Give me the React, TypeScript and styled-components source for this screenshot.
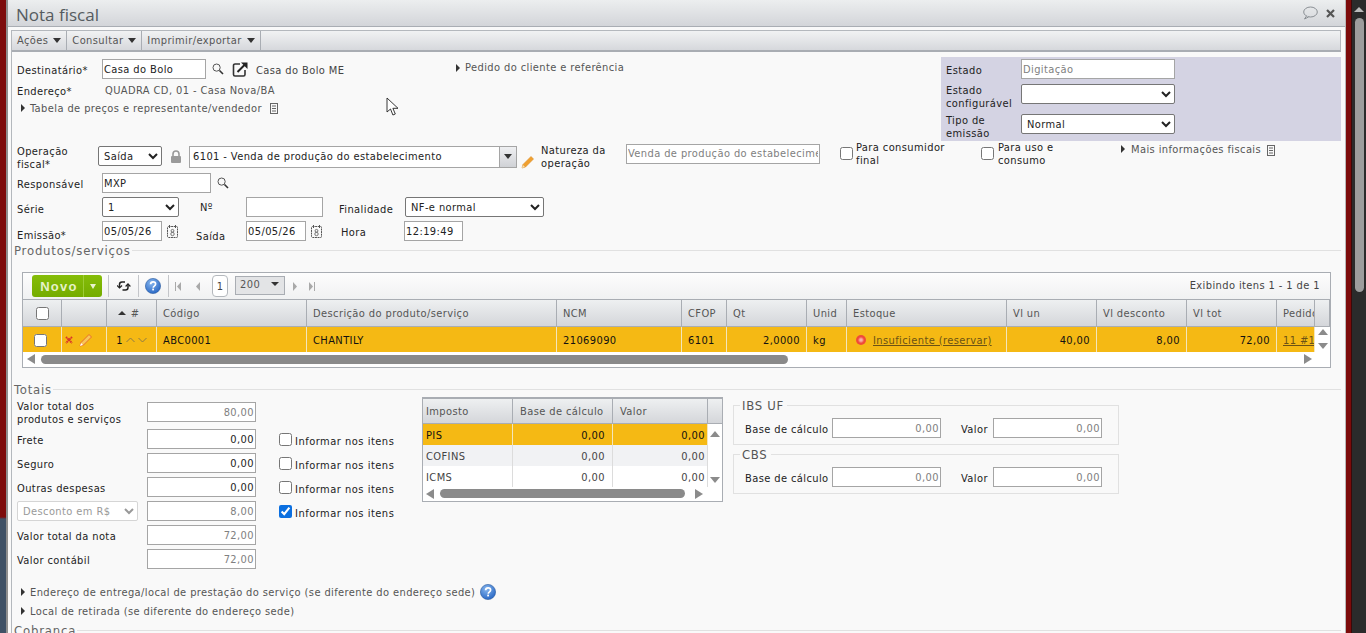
import React from "react";
import styled, { createGlobalStyle } from "styled-components";

const Global = createGlobalStyle`
  html, body { margin: 0; padding: 0; overflow: hidden; background: #2a2a2a; }
  * { box-sizing: border-box; }
  body { font-family: "DejaVu Sans", "Liberation Sans", sans-serif; font-stretch: condensed; font-size: 11px; letter-spacing: .4px; color: #333; }
`;

const Shell = styled.div`display: flex; width: 1366px; height: 633px; overflow: hidden;`;
const LeftEdge = styled.div`
  width: 8px; flex: none;
  background: linear-gradient(#7d0b0b 0, #7d0b0b 517px, #3f5166 519px, #3f5166 100%);
  border-right: 2px solid #8f8f8f;
`;
const Dialog = styled.div`width: 1337px; flex: none; background: #f9f9f9; display: flex; flex-direction: column; overflow: hidden;`;
const RightEdge = styled.div`width: 7px; flex: none; background: #7d0b0b; border-left: 1px solid #b8b8b8; border-right: 1px solid #3a0a0a;`;
const PageScroll = styled.div`width: 14px; flex: none; background: #2b2b2b; display: flex; flex-direction: column; align-items: center; padding-top: 7px;`;
const ScrollThumb = styled.div`width: 9px; height: 274px; margin-top: 6px; background: #9d9d9d; border-radius: 5px;`;

const TitleBar = styled.div`
  height: 27px; flex: none; display: flex; align-items: center; justify-content: space-between;
  padding: 2px 10px 0 8px; background: linear-gradient(#eceeef, #d3d5d9); border-bottom: 1px solid #a9adb3;
`;
const Title = styled.div`font-size: 17px; letter-spacing: 0; color: #555b60; font-stretch: normal; font-family: "Open Sans", sans-serif;`;
const TitleIcons = styled.div`display: flex; align-items: center; gap: 8px; margin-top: -2px;`;

const Body = styled.div`flex: 1; margin: 3px 0 0 3px; width: 1330px; display: flex; flex-direction: column; border-left: 1px solid #b4b8bd;`;
const MenuBar = styled.div`
  height: 22px; flex: none; display: flex; background: linear-gradient(#f1f2f3, #d6d8dc);
  border: 1px solid #b4b8bd; border-left: 0; border-bottom: 2px solid #a9adb3;
`;
const MenuItem = styled.div`
  display: flex; align-items: center; gap: 5px; padding: 0 5px; color: #555; border-right: 1px solid #a9adb3; font-size: 11px;
`;
const Caret = styled.span`width: 0; height: 0; border: 4.5px solid transparent; border-top: 5px solid #333; border-bottom: 0; margin-top: -1px;`;

const Form = styled.div`flex: 1; padding: 5px 0 0 5px; display: flex; flex-direction: column;`;

const TopSection = styled.div`display: flex; height: 84px; flex: none;`;
const TopLeft = styled.div`width: 436px; flex: none; display: flex; flex-direction: column; padding-top: 2px;`;
const TopMiddle = styled.div`flex: 1; padding: 3px 0 0 3px; line-height: 14px;`;
const StatePanel = styled.div`width: 400px; flex: none; background: #d4d3e3; display: grid; grid-template-columns: 75px 154px; grid-auto-rows: min-content; padding: 2px 0 0 5px; align-content: start;`;
const PanelLabel = styled.div<{ $h: number; $pt: number }>`color: #222; line-height: 13px; height: ${(p) => p.$h}px; display: flex; align-items: center; padding-top: ${(p) => p.$pt}px;`;
const PanelControl = styled.div`display: flex; align-items: center;`;

const Row = styled.div<{ $h: number; $gap?: number; $ml?: number; $mt?: number }>`
  display: flex; align-items: center; height: ${(p) => p.$h}px; flex: none; gap: ${(p) => p.$gap ?? 0}px;
  margin-left: ${(p) => p.$ml ?? 0}px; margin-top: ${(p) => p.$mt ?? 0}px;
`;
const Label = styled.div<{ $w?: number; $ml?: number; $c?: string; $dy?: number }>`
  width: ${(p) => (p.$w ? `${p.$w}px` : "auto")}; flex: none; margin-left: ${(p) => p.$ml ?? 0}px; color: ${(p) => p.$c ?? "#222"};
  line-height: 13px; position: relative; top: ${(p) => p.$dy ?? 0}px; white-space: nowrap;
`;
const GrayText = styled.span`color: #555; white-space: nowrap;`;

const Input = styled.input<{ $w: number; $ml?: number; $right?: boolean; $muted?: boolean; $mt?: number }>`
  width: ${(p) => p.$w}px; height: 20px; flex: none; margin: ${(p) => p.$mt ?? 0}px 0 0 ${(p) => p.$ml ?? 0}px; padding: 0 1px;
  border: 1px solid #a5a5a5; background: #fff; border-radius: 0; outline: none;
  font: inherit; font-stretch: condensed; font-family: inherit; letter-spacing: .4px;
  color: ${(p) => (p.$muted ? "#808080" : "#222")}; text-align: ${(p) => (p.$right ? "right" : "left")};
`;
const Select = styled.select<{ $w: number; $ml?: number; $h?: number; $muted?: boolean; $mt?: number }>`
  width: ${(p) => p.$w}px; height: ${(p) => p.$h ?? 20}px; flex: none; margin: ${(p) => p.$mt ?? 0}px 0 0 ${(p) => p.$ml ?? 0}px;
  font: inherit; font-family: inherit; font-stretch: condensed; letter-spacing: .4px; background: #fff; color: ${(p) => (p.$muted ? "#999" : "#222")};
  border: 1px solid ${(p) => (p.$muted ? "#d5d5d5" : "#767676")}; border-radius: 2px; padding: 0 0 0 1px; outline: none;
`;
const Check = styled.input.attrs({ type: "checkbox", readOnly: true })<{ $ml?: number; $mt?: number }>`
  width: 13px; height: 13px; margin: ${(p) => p.$mt ?? 0}px 0 0 ${(p) => p.$ml ?? 0}px; flex: none; accent-color: #0b6fe0;
`;
const Arrow = styled.span<{ $mt?: number }>`width: 0; height: 0; flex: none; margin-top: ${(p) => p.$mt ?? 0}px; border: 4px solid transparent; border-left: 4px solid #333; border-right: 0;`;

const Combo = styled.div`
  width: 328px; height: 22px; flex: none; margin: 2px 0 0 7px; display: flex; border: 1px solid #a5a5a5; background: #fff;
`;
const ComboText = styled.div`flex: 1; display: flex; align-items: center; padding: 0 0 1px 3px; color: #222;`;
const ComboBtn = styled.div`width: 17px; display: flex; align-items: center; justify-content: center; background: linear-gradient(#eff0f2, #d0d2d6); border-left: 1px solid #a5a5a5;`;

const SectionTitle = styled.div<{ $mt?: number }>`
  display: flex; align-items: center; margin: ${(p) => p.$mt ?? 0}px 0 0 -3px; height: 15px; flex: none;
  font-size: 13px; letter-spacing: .8px; color: #666; line-height: 15px;
  &::after { content: ""; flex: 1; height: 1px; background: #e1e1e1; margin-left: 1px; }
`;

const Grid = styled.div`width: 1309px; height: 96px; flex: none; margin: 14px 0 0 5px; border: 1px solid #a9adb3; background: #fff; display: flex; flex-direction: column;`;
const GridToolbar = styled.div`
  height: 26px; flex: none; display: flex; align-items: center; background: linear-gradient(#fdfdfd, #f0f1f2);
`;
const NewButton = styled.div`
  margin-left: 9px; width: 70px; height: 22px; display: flex; align-items: stretch; background: linear-gradient(#85bd08, #74ac00);
  border-radius: 3px; color: #e6f2c8; font-weight: bold; font-size: 13px; font-stretch: normal; font-family: "Liberation Sans", sans-serif;
`;
const NewLabel = styled.div`flex: 1; display: flex; align-items: center; justify-content: center; border-right: 1px solid #9ccc35; letter-spacing: 1.3px; padding-left: 3px;`;
const NewCaret = styled.div`width: 18px; display: flex; align-items: center; justify-content: center;`;
const WhiteCaret = styled.span`width: 0; height: 0; border: 3px solid transparent; border-top: 5px solid #e9f3cf; border-bottom: 0;`;
const ToolSep = styled.div<{ $ml: number }>`width: 1px; height: 22px; background: #c4c6ca; margin-left: ${(p) => p.$ml}px;`;
const ToolIcon = styled.div<{ $ml: number; $w: number }>`width: ${(p) => p.$w}px; margin-left: ${(p) => p.$ml}px; display: flex; align-items: center; justify-content: center; flex: none;`;
const PageBox = styled.div`width: 16px; height: 22px; margin-left: 11px; background: #fff; border: 1px solid #b4b8bd; border-radius: 4px; display: flex; align-items: center; justify-content: center; color: #444;`;
const PageSize = styled.div`width: 50px; height: 19px; margin: -2px 0 0 7px; border: 1px solid #a9adb3; background: #e3e4e6; display: flex; align-items: center; justify-content: space-between; padding: 0 5px 2px 4px; color: #555;`;
const Showing = styled.div`margin-left: auto; padding-right: 10px; color: #444; padding-bottom: 1px;`;

const HeadRow = styled.div<{ $h: number }>`display: flex; height: ${(p) => p.$h}px; flex: none; background: linear-gradient(#eef0f1, #d4d6da); border-top: 1px solid #a9adb3; border-bottom: 1px solid #a9adb3;`;
const HeadCell = styled.div<{ $w: number; $center?: boolean; $pl?: number; $noBorder?: boolean }>`
  width: ${(p) => p.$w}px; flex: none; display: flex; align-items: center; justify-content: ${(p) => (p.$center ? "center" : "flex-start")}; gap: 5px; padding-left: ${(p) => (p.$center ? 0 : p.$pl ?? 6)}px;
  border-right: ${(p) => (p.$noBorder ? "0" : "1px solid #a9adb3")}; color: #555; overflow: hidden; white-space: nowrap;
`;
const SortHead = styled(HeadCell)`padding-right: 6px;`;
const DataRow = styled.div<{ $h: number; $tone?: "sel" | "alt" | "plain" }>`
  display: flex; height: ${(p) => p.$h}px; flex: none;
  background: ${(p) => (p.$tone === "alt" ? "#f1f2f4" : p.$tone === "plain" ? "#fff" : "#f5b914")};
  color: ${(p) => (p.$tone === "sel" || !p.$tone ? "#111" : "#444")};
  & > div { border-right-color: ${(p) => (p.$tone === "sel" || !p.$tone ? "#f3e6bd" : "#dcdcdc")}; }
`;
const DataCell = styled.div<{ $w: number; $right?: boolean; $center?: boolean; $pl?: number; $pr?: number }>`
  width: ${(p) => p.$w}px; flex: none; display: flex; align-items: center; overflow: hidden; white-space: nowrap; gap: 3px;
  justify-content: ${(p) => (p.$right ? "flex-end" : p.$center ? "center" : "flex-start")};
  padding: 1px ${(p) => (p.$right ? p.$pr ?? 6 : 0)}px 0 ${(p) => (p.$right || p.$center ? 0 : p.$pl ?? 6)}px;
  border-right: 1px solid #e9e4d2;
`;
const ActionCell = styled(DataCell)`gap: 6px; padding-left: 3px;`;
const RowWrap = styled.div`display: flex;`;
const VScroll = styled.div<{ $w: number; $pt: number; $pb: number }>`
  width: ${(p) => p.$w}px; flex: none; display: flex; flex-direction: column; align-items: center; justify-content: space-between;
  padding: ${(p) => p.$pt}px 0 ${(p) => p.$pb}px; background: #fff;
`;
const Tri = styled.span<{ $dir: "up" | "down" | "left" | "right"; $s?: number; $len?: number; $c?: string; $ml?: number }>`
  width: 0; height: 0; flex: none; margin-left: ${(p) => p.$ml ?? 0}px;
  ${(p) => {
    const s = p.$s ?? 5; const l = p.$len ?? s; const c = p.$c ?? "#8b8b8b";
    if (p.$dir === "up") return `border-left:${s}px solid transparent;border-right:${s}px solid transparent;border-bottom:${l}px solid ${c};`;
    if (p.$dir === "down") return `border-left:${s}px solid transparent;border-right:${s}px solid transparent;border-top:${l}px solid ${c};`;
    if (p.$dir === "left") return `border-top:${s}px solid transparent;border-bottom:${s}px solid transparent;border-right:${l}px solid ${c};`;
    return `border-top:${s}px solid transparent;border-bottom:${s}px solid transparent;border-left:${l}px solid ${c};`;
  }}
`;
const HScroll = styled.div<{ $pl: number }>`flex: 1; display: flex; align-items: center; background: #fff; padding: 0 0 1px ${(p) => p.$pl}px;`;
const HThumb = styled.div<{ $w: number; $ml: number }>`width: ${(p) => p.$w}px; height: 9px; background: #8a8a8a; border-radius: 5px; margin-left: ${(p) => p.$ml}px;`;
const LinkText = styled.span`color: #6b5215; text-decoration: underline;`;
const StatusDot = styled.span`width: 10px; height: 10px; border-radius: 50%; background: radial-gradient(#f7b0a8 15%, #f04a3a 45%); margin: 0 4px 0 3px;flex:none;`;

const TotalsArea = styled.div`display: flex; height: 178px; flex: none;`;
const TotalsCol = styled.div`width: 247px; flex: none;`;
const TotalRow = styled.div<{ $h: number }>`display: flex; height: ${(p) => p.$h}px; align-items: center; justify-content: space-between; padding-right: 8px;`;
const ChecksCol = styled.div`width: 158px; flex: none; padding-top: 30px; display: flex; flex-direction: column;`;
const CheckRow = styled.div`height: 24px; display: flex; align-items: center; gap: 3px; margin-left: 15px; color: #222;`;
const CheckText = styled.span`position: relative; top: 2px; letter-spacing: .5px;`;
const TaxGrid = styled.div`width: 301px; height: 105px; flex: none; border: 1px solid #a9adb3; background: #fff; display: flex; flex-direction: column;`;
const TaxBoxes = styled.div`flex: none; margin: 1px 0 0 10px; display: flex; flex-direction: column; gap: 2px;`;
const TaxBox = styled.fieldset`
  width: 386px; height: 47px; margin: 0; padding: 6px 0 0 11px; border: 1px solid #e1e1e1; display: flex; align-items: center;
`;
const TaxLegend = styled.legend`font-size: 13px; letter-spacing: .7px; color: #555; padding: 0 3px 0 2px; margin-left: -5px; line-height: 14px; position: relative; top: 1px;`;
const Collapsible = styled.div<{ $mt: number }>`display: flex; align-items: center; gap: 5px; margin: ${(p) => p.$mt}px 0 0 4px; color: #555; height: 14px; flex: none;`;

const DocIcon = () => (
  <svg width="10" height="11" viewBox="0 0 10 11" fill="none" stroke="#666" style={{ flex: "none" }}><rect x="1.5" y="0.5" width="7" height="10" /><path d="M3 3h4M3 5.5h4M3 8h4" /></svg>
);
const Search = () => (
  <svg width="12" height="12" viewBox="0 0 12 12" fill="none" style={{ flex: "none" }}><circle cx="4.6" cy="4.6" r="3.6" stroke="#555" /><path d="M7.5 7.5l3.5 3.5" stroke="#333" strokeWidth="1.6" /></svg>
);
const Pencil = ({ faded }: { faded?: boolean }) => (
  <svg width="14" height="14" viewBox="0 0 14 14" style={{ flex: "none" }}>
    <path d="M1 13l1-3.500L10 1.500 12.500 4 4.500 12z" fill={faded ? "#f8c65a" : "#f0a030"} stroke={faded ? "#e8702a" : "#d98a20"} strokeWidth={faded ? 1 : 0.6} />
    <path d="M1 13l1-3 2 2z" fill={faded ? "#fff" : "#f5e0b8"} />
  </svg>
);
const Calendar = () => (
  <svg width="11" height="13" viewBox="0 0 11 13" fill="none" stroke="#555" style={{ flex: "none" }}><rect x=".5" y="1.5" width="10" height="11" rx="1" strokeDasharray="2 .6" /><path d="M2.500 0v3M8.500 0v3" /><circle cx="5.500" cy="5.800" r="1.400" strokeWidth=".8" /><circle cx="5.500" cy="9" r="1.700" strokeWidth=".8" /></svg>
);
const Lock = () => (
  <svg width="12" height="13" viewBox="0 0 12 13" style={{ flex: "none", marginLeft: 8 }}><path d="M3 6V4a3 3 0 016 0v2" fill="none" stroke="#999" strokeWidth="1.6" /><rect x="1" y="6" width="10" height="7" rx="1" fill="#9a9a9a" /></svg>
);
const External = () => (
  <svg width="17" height="16" viewBox="0 0 17 16" fill="none" style={{ flex: "none" }}><path d="M8 3H3a1.500 1.500 0 00-1.500 1.500v9A1.500 1.500 0 003 15h8.500a1.500 1.500 0 001.500-1.500V9" stroke="#333" strokeWidth="1.6" /><path d="M5.500 11l8-8" stroke="#222" strokeWidth="2" /><path d="M9 1.500h6.500V8z" fill="#222" /></svg>
);
const HelpBadge = ({ size = 16 }: { size?: number }) => (
  <svg width={size} height={size} viewBox="0 0 16 16" style={{ flex: "none" }}>
    <defs><radialGradient id="hb" cx=".4" cy=".3" r=".8"><stop offset="0" stopColor="#86b6ee" /><stop offset="1" stopColor="#1f5fc0" /></radialGradient></defs>
    <circle cx="8" cy="8" r="7.600" fill="url(#hb)" stroke="#2a5a9e" strokeWidth=".6" />
    <path d="M5.600 6.200C5.700 4.600 6.700 3.800 8.100 3.800c1.500 0 2.500.9 2.500 2.200 0 1.100-.7 1.600-1.400 2.100-.6.4-.9.8-.9 1.600" fill="none" stroke="#fff" strokeWidth="1.700" />
    <rect x="7.200" y="10.600" width="1.800" height="1.800" fill="#fff" />
  </svg>
);
const Refresh = () => (
  <svg width="14" height="12" viewBox="0 0 14 12" fill="none" stroke="#222" strokeWidth="1.5"><path d="M2.500 7V4.500C2.500 3 3.500 2 5 2h3" /><path d="M0 5.500l2.500 2.500L5 5.500" strokeWidth="1.2" /><path d="M11 5v2.500c0 1.500-1 2.500-2.500 2.500h-3" /><path d="M8.600 6.500L11 3.800l2.400 2.700" strokeWidth="1.2" /></svg>
);
const Comment = () => (
  <svg width="16" height="14" viewBox="0 0 16 14" fill="none" stroke="#8a8f94"><ellipse cx="8.500" cy="6" rx="6.800" ry="5" /><path d="M4.500 10L2.500 13l4-2" fill="#e0e2e4" /></svg>
);
const Close = () => (
  <svg width="9" height="9" viewBox="0 0 9 9" stroke="#555" strokeWidth="2.2"><path d="M1 1l7 7M8 1L1 8" /></svg>
);
const Cursor = () => (
  <svg width="14" height="20" viewBox="0 0 14 20" style={{ position: "absolute", left: 386, top: 97 }}><path d="M1 1v14l3.500-3 2.400 6 2.400-1-2.400-5.700H12z" fill="#fff" stroke="#222" strokeWidth=".9" /></svg>
);
const RedX = () => (
  <svg width="8" height="8" viewBox="0 0 8 8" stroke="#d8322a" strokeWidth="2" strokeDasharray="1.500 .5" style={{ flex: "none" }}><path d="M1 1l6 6M7 1L1 7" /></svg>
);
const Chevron = ({ up }: { up?: boolean }) => (
  <svg width="9" height="6" viewBox="0 0 9 6" fill="none" stroke="#8c7a44" style={{ flex: "none" }}><path d={up ? "M.5 5L4.500 1l4 4" : "M.5 1l4 4 4-4"} /></svg>
);
const Pager = ({ kind }: { kind: "first" | "prev" | "next" | "last" }) => (
  <svg width="7" height="9" viewBox="0 0 7 9" fill="#a9a9a9" style={{ flex: "none" }}>
    {kind === "first" && <><rect width="1" height="9" /><path d="M6 0v9L2 4.500z" /></>}
    {kind === "prev" && <path d="M6 0v9L2 4.500z" />}
    {kind === "next" && <path d="M1 0v9l4-4.500z" />}
    {kind === "last" && <><path d="M0 0v9l4-4.500z" /><rect x="5" width="1" height="9" /></>}
  </svg>
);

const columns: { t: string; w: number; v: React.ReactNode; right?: boolean }[] = [
  { t: "Código", w: 150, v: "ABC0001" },
  { t: "Descrição do produto/serviço", w: 250, v: "CHANTILY" },
  { t: "NCM", w: 125, v: "21069090" },
  { t: "CFOP", w: 45, v: "6101" },
  { t: "Qt", w: 80, v: "2,0000", right: true },
  { t: "Unid", w: 40, v: "kg" },
  { t: "Estoque", w: 160, v: <><StatusDot /><LinkText>Insuficiente (reservar)</LinkText></> },
  { t: "Vl un", w: 90, v: "40,00", right: true },
  { t: "Vl desconto", w: 90, v: "8,00", right: true },
  { t: "Vl tot", w: 90, v: "72,00", right: true },
];

const totals = [
  { l: "Frete", v: "0,00" },
  { l: "Seguro", v: "0,00" },
  { l: "Outras despesas", v: "0,00" },
];
const taxes: { n: string; tone: "sel" | "alt" | "plain" }[] = [
  { n: "PIS", tone: "sel" },
  { n: "COFINS", tone: "alt" },
  { n: "ICMS", tone: "plain" },
];

const TaxPair = () => (
  <>
    <Label $w={87} $dy={1}>Base de cálculo</Label>
    <Input $w={109} $right $muted defaultValue="0,00" />
    <Label $w={32} $ml={20} $dy={1}>Valor</Label>
    <Input $w={109} $right $muted defaultValue="0,00" />
  </>
);

export default function App() {
  return (
    <Shell>
      <Global />
      <LeftEdge />
      <Dialog>
        <TitleBar>
          <Title>Nota fiscal</Title>
          <TitleIcons><Comment /><Close /></TitleIcons>
        </TitleBar>
        <Body>
          <MenuBar>
            <MenuItem>Ações <Caret /></MenuItem>
            <MenuItem>Consultar <Caret /></MenuItem>
            <MenuItem>Imprimir/exportar <Caret /></MenuItem>
          </MenuBar>
          <Form>
            <TopSection>
              <TopLeft>
                <Row $h={20}>
                  <Label $w={85} $dy={1}>Destinatário*</Label>
                  <Input $w={104} defaultValue="Casa do Bolo" />
                  <Row $h={20} $ml={6}><Search /></Row>
                  <Row $h={20} $ml={8}><External /></Row>
                  <Label $ml={7} $c="#444" $dy={1}>Casa do Bolo ME</Label>
                </Row>
                <Row $h={20} $mt={1}>
                  <Label $w={88} $dy={1}>Endereço*</Label>
                  <GrayText>QUADRA CD, 01 - Casa Nova/BA</GrayText>
                </Row>
                <Row $h={14} $gap={5} $ml={4} $mt={1}>
                  <Arrow /><GrayText>Tabela de preços e representante/vendedor</GrayText><Row $h={12} $ml={2}><DocIcon /></Row>
                </Row>
              </TopLeft>
              <TopMiddle>
                <Row $h={14} $gap={5} $mt={1}><Arrow /><GrayText>Pedido do cliente e referência</GrayText></Row>
              </TopMiddle>
              <StatePanel>
                <PanelLabel $h={20} $pt={2}>Estado</PanelLabel>
                <PanelControl><Input $w={154} $muted defaultValue="Digitação" /></PanelControl>
                <PanelLabel $h={30} $pt={6}>Estado<br />configurável</PanelLabel>
                <PanelControl><Select $w={154}><option></option></Select></PanelControl>
                <PanelLabel $h={30} $pt={6}>Tipo de<br />emissão</PanelLabel>
                <PanelControl><Select $w={154}><option>Normal</option></Select></PanelControl>
              </StatePanel>
            </TopSection>

            <Row $h={28} $mt={1}>
              <Label $w={81} $dy={2}>Operação<br />fiscal*</Label>
              <Select $w={64}><option>Saída</option></Select>
              <Lock />
              <Combo>
                <ComboText>6101 - Venda de produção do estabelecimento</ComboText>
                <ComboBtn><Caret /></ComboBtn>
              </Combo>
              <Row $h={14} $ml={4} $mt={11}><Pencil /></Row>
              <Label $w={85} $ml={6} $dy={1}>Natureza da<br />operação</Label>
              <Input $w={194} $muted $mt={-5} defaultValue="Venda de produção do estabelecimento" />
              <Check $ml={20} $mt={-6} />
              <Label $w={125} $ml={3} $dy={-2}>Para consumidor<br />final</Label>
              <Check $mt={-6} />
              <Label $w={123} $ml={4} $dy={-2}>Para uso e<br />consumo</Label>
              <Arrow $mt={-14} />
              <Label $ml={6} $c="#555" $dy={-7}>Mais informações fiscais</Label>
              <Row $h={12} $ml={5} $mt={-12}><DocIcon /></Row>
            </Row>

            <Row $h={20} $mt={3}>
              <Label $w={85} $dy={1}>Responsável</Label>
              <Input $w={109} defaultValue="MXP" />
              <Row $h={20} $ml={6}><Search /></Row>
            </Row>
            <Row $h={20} $mt={4}>
              <Label $w={85} $dy={2}>Série</Label>
              <Select $w={77}><option>1</option></Select>
              <Label $w={46} $ml={21}>Nº</Label>
              <Input $w={77} />
              <Label $w={66} $ml={16} $dy={2}>Finalidade</Label>
              <Select $w={139}><option>NF-e normal</option></Select>
            </Row>
            <Row $h={20} $mt={4}>
              <Label $w={85} $dy={4}>Emissão*</Label>
              <Input $w={60} defaultValue="05/05/26" />
              <Row $h={20} $ml={5}><Calendar /></Row>
              <Label $w={50} $ml={18} $dy={5}>Saída</Label>
              <Input $w={60} defaultValue="05/05/26" />
              <Row $h={20} $ml={5}><Calendar /></Row>
              <Label $w={63} $ml={19} $dy={1}>Hora</Label>
              <Input $w={59} defaultValue="12:19:49" />
            </Row>

            <SectionTitle $mt={2}>Produtos/serviços</SectionTitle>
            <Grid>
              <GridToolbar>
                <NewButton><NewLabel>Novo</NewLabel><NewCaret><WhiteCaret /></NewCaret></NewButton>
                <ToolSep $ml={6} />
                <ToolIcon $ml={7} $w={16}><Refresh /></ToolIcon>
                <ToolSep $ml={6} />
                <ToolIcon $ml={6} $w={16}><HelpBadge /></ToolIcon>
                <ToolSep $ml={7} />
                <ToolIcon $ml={6} $w={7}><Pager kind="first" /></ToolIcon>
                <ToolIcon $ml={12} $w={7}><Pager kind="prev" /></ToolIcon>
                <PageBox>1</PageBox>
                <PageSize>200 <Tri $dir="down" $c="#333" $s={4} /></PageSize>
                <ToolIcon $ml={7} $w={7}><Pager kind="next" /></ToolIcon>
                <ToolIcon $ml={10} $w={7}><Pager kind="last" /></ToolIcon>
                <Showing>Exibindo itens 1 - 1 de 1</Showing>
              </GridToolbar>
              <HeadRow $h={28}>
                <HeadCell $w={39} $center><Check /></HeadCell>
                <HeadCell $w={45} />
                <SortHead $w={50} $center><Tri $dir="up" $c="#333" $s={4} $len={4} /># </SortHead>
                {columns.map((c) => <HeadCell key={c.t} $w={c.w}>{c.t}</HeadCell>)}
                <HeadCell $w={38}>Pedido</HeadCell>
                <HeadCell $w={15} />
              </HeadRow>
              <RowWrap>
                <DataRow $h={25} $tone="sel">
                  <DataCell $w={39} $center><Check $ml={-4} /></DataCell>
                  <ActionCell $w={45}><RedX /><Pencil faded /></ActionCell>
                  <DataCell $w={50} $center>1 <Chevron up /> <Chevron /></DataCell>
                  {columns.map((c) => <DataCell key={c.t} $w={c.w} $right={c.right}>{c.v}</DataCell>)}
                  <DataCell $w={38}><LinkText>11 #1</LinkText></DataCell>
                </DataRow>
                <VScroll $w={15} $pt={2} $pb={3}><Tri $dir="up" $s={5} $len={6} /><Tri $dir="down" $s={5} $len={6} /></VScroll>
              </RowWrap>
              <HScroll $pl={4}>
                <Tri $dir="left" $s={5} $len={8} />
                <HThumb $w={747} $ml={6} />
                <Tri $dir="right" $s={5} $len={8} $ml={516} />
              </HScroll>
            </Grid>

            <SectionTitle $mt={14}>Totais</SectionTitle>
            <TotalsArea>
              <TotalsCol>
                <TotalRow $h={30}><Label $dy={1}>Valor total dos<br />produtos e serviços</Label><Input $w={109} $right $muted defaultValue="80,00" /></TotalRow>
                {totals.map((t) => (
                  <TotalRow key={t.l} $h={24}><Label $dy={1}>{t.l}</Label><Input $w={109} $right defaultValue={t.v} /></TotalRow>
                ))}
                <TotalRow $h={24}><Select $w={121} $muted><option>Desconto em R$</option></Select><Input $w={109} $right $muted defaultValue="8,00" /></TotalRow>
                <TotalRow $h={24}><Label $dy={1}>Valor total da nota</Label><Input $w={109} $right $muted defaultValue="72,00" /></TotalRow>
                <TotalRow $h={24}><Label $dy={1}>Valor contábil</Label><Input $w={109} $right $muted defaultValue="72,00" /></TotalRow>
              </TotalsCol>
              <ChecksCol>
                <CheckRow><Check /><CheckText>Informar nos itens</CheckText></CheckRow>
                <CheckRow><Check /><CheckText>Informar nos itens</CheckText></CheckRow>
                <CheckRow><Check /><CheckText>Informar nos itens</CheckText></CheckRow>
                <CheckRow><Check defaultChecked /><CheckText>Informar nos itens</CheckText></CheckRow>
              </ChecksCol>
              <TaxGrid>
                <HeadRow $h={26}>
                  <HeadCell $w={90} $pl={3}>Imposto</HeadCell>
                  <HeadCell $w={100} $pl={7}>Base de cálculo</HeadCell>
                  <HeadCell $w={95} $pl={7}>Valor</HeadCell>
                  <HeadCell $w={14} $noBorder />
                </HeadRow>
                <RowWrap>
                  <div>
                    {taxes.map((t) => (
                      <DataRow key={t.n} $h={21} $tone={t.tone}>
                        <DataCell $w={90} $pl={3}>{t.n}</DataCell>
                        <DataCell $w={100} $right $pr={7}>0,00</DataCell>
                        <DataCell $w={95} $right $pr={2}>0,00</DataCell>
                      </DataRow>
                    ))}
                  </div>
                  <VScroll $w={14} $pt={7} $pb={4}><Tri $dir="up" $s={5} $len={6} /><Tri $dir="down" $s={5} $len={6} /></VScroll>
                </RowWrap>
                <HScroll $pl={3}>
                  <Tri $dir="left" $s={5} $len={8} />
                  <HThumb $w={245} $ml={6} />
                  <Tri $dir="right" $s={5} $len={8} $ml={10} />
                </HScroll>
              </TaxGrid>
              <TaxBoxes>
                <TaxBox><TaxLegend>IBS UF</TaxLegend><TaxPair /></TaxBox>
                <TaxBox><TaxLegend>CBS</TaxLegend><TaxPair /></TaxBox>
              </TaxBoxes>
            </TotalsArea>
            <Collapsible $mt={10}><Arrow /><span>Endereço de entrega/local de prestação do serviço (se diferente do endereço sede)</span><HelpBadge /></Collapsible>
            <Collapsible $mt={5}><Arrow /><span>Local de retirada (se diferente do endereço sede)</span></Collapsible>
            <SectionTitle $mt={5}>Cobrança</SectionTitle>
          </Form>
        </Body>
      </Dialog>
      <RightEdge />
      <PageScroll><Tri $dir="up" $c="#bbb" $s={5} $len={5} /><ScrollThumb /></PageScroll>
      <Cursor />
    </Shell>
  );
}
